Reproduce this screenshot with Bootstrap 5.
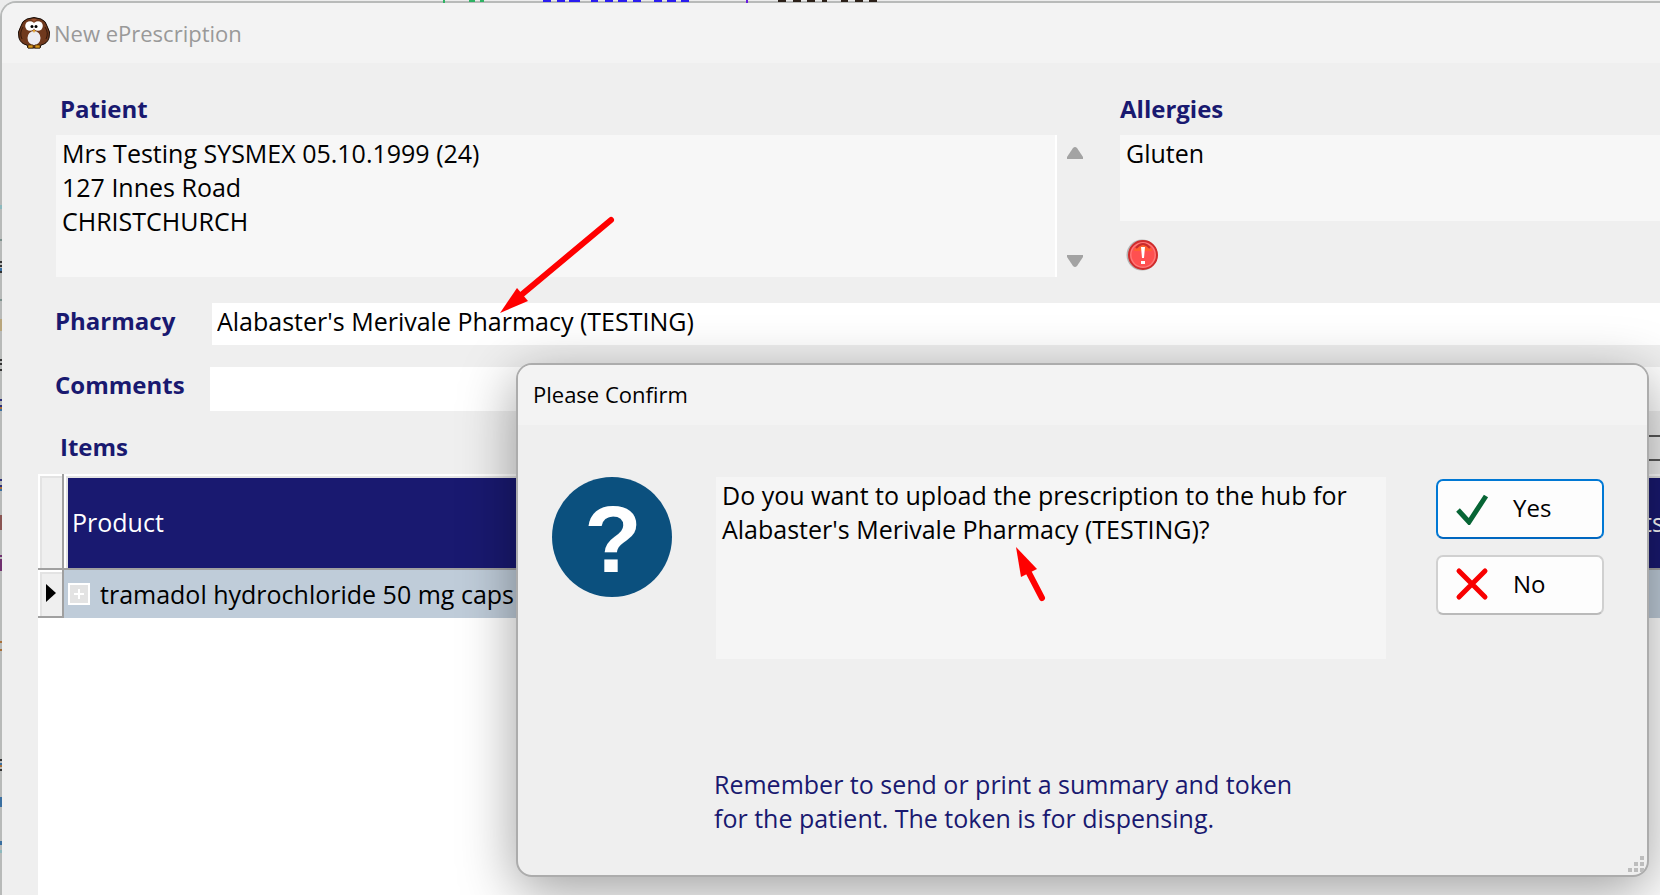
<!DOCTYPE html>
<html lang="en">
<head>
<meta charset="utf-8">
<meta name="viewport" content="width=device-width, initial-scale=1">
<title>New ePrescription</title>
<link href="https://cdn.jsdelivr.net/npm/bootstrap@5.3.0/dist/css/bootstrap.min.css" rel="stylesheet">
<style>
  body { font-family: "Open Sans", "Noto Sans", sans-serif; font-size: 25px; line-height: 34px; color: #000; background: #ececec; overflow: hidden; }
  .app-window { height: 100vh; border: 2px solid #b8bab9; border-width: 2px 0 0 2px; border-top-left-radius: 16px; background: #efefef; margin-top: 1px; overflow: hidden; }
  .title-strip { height: 60px; background: #f3f3f3; font-size: 22px; line-height: 30px; }
  .app-title { color: #999; gap: 4px; padding: 0 0 0 16px; }
  .form-body { padding-top: 30px; }
  .field-label { font-size: 24px; line-height: 32px; font-weight: 700; color: #191970; }
  .top-grid { display: grid; grid-template-columns: minmax(0, 1001fr) 35px minmax(0, 568fr); padding-left: 54px; }
  .allergy-col { margin-left: 28px; }
  .plain-field { border: 0; border-radius: 0; outline: 0; resize: none; color: #000; overflow: hidden; display: block; width: 100%; }
  .info-area { background: #f7f7f7; padding: 1px 6px; margin-top: 10px; }
  .patient-area { height: 142px; border-right: 2px solid #fff; }
  .allergy-area { height: 86px; }
  .scroll-col { margin-top: 42px; height: 142px; padding: 12px 0 10px; }
  .scroll-btn { border: 0; background: none; padding: 0; line-height: 0; }
  .entry-row { padding-left: 53px; }
  .entry-row .field-label { flex: 0 0 155px; }
  .pharmacy-row { margin-top: 26px; }
  .pharmacy-row .field-label { line-height: 36px; }
  .pharmacy-row input { height: 42px; padding: 0 5px 6px; margin-left: 2px; line-height: 34px; }
  .comments-row { margin-top: 22px; }
  .comments-row .field-label { line-height: 36px; }
  .comments-row input { height: 44px; padding: 0 5px; }
  .items-head { margin-top: 20px; padding-left: 58px; height: 43px; }
  .option-box { width: 60px; height: 26px; margin-top: 4px; border: 2px solid #5a5a5a; border-right: 0; }
  .items-panel { margin-left: 36px; background: #fff; }
  .items-grid { width: 100%; border-collapse: separate; border-spacing: 0; table-layout: fixed; }
  .items-grid .marker { width: 26px; padding: 0; background: #efefef; border-right: 2px solid #a0a0a0; border-bottom: 2px solid #a0a0a0; box-shadow: inset 2px 2px #fff, inset 4px 4px #e3e3e3; }
  .items-grid th { height: 96px; font-weight: 400; color: #fff; border-bottom: 2px solid #a0a0a0; }
  .items-grid th.head-cell { background: #191970; padding: 2px 8px 0; box-shadow: inset 2px 2px #fff, inset 4px 4px #e3e3e3; }
  .items-grid th.tail-cell { width: 17px; padding: 2px 0 0; background: #191970; box-shadow: inset 0 2px #fff, inset 0 4px #e3e3e3; }
  .items-grid tbody .marker { height: 48px; }
  .items-grid td.item-cell { background: #bfccd9; padding: 0 4px; white-space: nowrap; }
  .expander { width: 22px; height: 22px; border: 2px solid #fff; background: #e3e3e3; padding: 0; line-height: 0; margin-right: 10px; }
  .confirm-window { position: absolute; top: 363px; left: 516px; right: 11px; border: 2px solid #acacac; border-radius: 16px; background: #efefef; overflow: hidden; box-shadow: 0 14px 56px rgba(0,0,0,.38); }
  .confirm-title { padding: 0 15px; line-height: 28px; }
  .confirm-title span { padding-bottom: 2px; }
  .confirm-body { padding: 52px 43px 40px 34px; }
  .message-col { margin: 0 50px 0 42px; min-width: 0; }
  .message-box { margin: 0 0 108px 2px; height: 182px; padding: 1px 6px; background: #f5f5f5; }
  .reminder { color: #191970; max-width: 620px; }
  .choice { width: 168px; height: 60px; padding: 0 0 2px 17px; gap: 24px; border: 2px solid #d0d0d0; border-bottom-color: #bababa; border-radius: 7px; background: #fdfdfd; font-size: 24px; line-height: 32px; color: #000; }
  .choice.is-default { border-color: #0078d4; border-bottom-color: #0067c0; margin: 2px 0 16px; }
  .size-grip { position: absolute; right: 3px; bottom: 3px; }
  .overlay-art { position: absolute; pointer-events: none; }
</style>
</head>
<body>
<div class="app-window">
  <header class="title-strip app-title d-flex align-items-center">
    <svg width="32" height="32" viewBox="0 0 32 32" aria-hidden="true">
      <path d="M9 2Q16-1 23 2Q28 4 29 9Q33 15 31 21Q29 27 23 28L22 31H10L9 28Q3 27 1 21Q-1 15 3 9Q4 4 9 2Z" fill="#70391d" stroke="#160b05"/>
      <path d="M5 10Q1 16 4 22M27 10Q31 16 28 22" stroke="#35180b" fill="none"/>
      <circle cx="12" cy="9" r="4.800" fill="#fff"/><circle cx="20" cy="9" r="4.800" fill="#fff"/>
      <circle cx="14" cy="9.500" r="1.500"/><circle cx="18" cy="9.500" r="1.500"/>
      <path d="M13 2L16 5L19 2Z" fill="#9b5330"/>
      <ellipse cx="16" cy="21" rx="6.500" ry="7" fill="#ededf2"/>
      <path d="M14.500 13H17.500L16 16Z" fill="#e5a021"/>
      <path d="M10 28H15V31H10ZM17 28H22V31H17Z" fill="#d99519" stroke="#342000" stroke-width=".6"/>
    </svg>
    <span>New ePrescription</span>
  </header>

  <main class="form-body d-flex flex-column">
    <div class="top-grid">
      <div>
        <label class="field-label d-block ps-1" for="patient">Patient</label>
        <textarea id="patient" class="plain-field info-area patient-area" readonly>Mrs Testing SYSMEX 05.10.1999 (24)
127 Innes Road
CHRISTCHURCH</textarea>
      </div>
      <div class="scroll-col d-flex flex-column justify-content-between align-items-center">
        <button class="scroll-btn" type="button" aria-label="Scroll up"><svg width="16" height="12"><path d="M6 1Q8-1 10 1L16 10V12H0V10Z" fill="#a3a3a3"/></svg></button>
        <button class="scroll-btn" type="button" aria-label="Scroll down"><svg width="16" height="12"><path d="M6 11Q8 13 10 11L16 2V0H0V2Z" fill="#a3a3a3"/></svg></button>
      </div>
      <div class="allergy-col">
        <label class="field-label d-block" for="allergies">Allergies</label>
        <textarea id="allergies" class="plain-field info-area allergy-area" readonly>Gluten</textarea>
        <svg class="d-block mt-3 ms-1" width="36" height="36" viewBox="0 0 36 36" role="img" aria-label="Alert">
          <circle cx="18" cy="18" r="15.500" fill="#b5b5b5"/>
          <circle cx="19" cy="18" r="14" fill="#f77" stroke="#d02c2c" stroke-width="2"/>
          <circle cx="19" cy="18" r="11.500" fill="#ff5050"/>
          <path d="M10 14Q12 7 19 7Q26 7 28 14Z" fill="#ff6230"/>
          <path d="M12 11Q19 3 26 11" fill="none" stroke="#c92b2b" stroke-width="2"/>
          <path d="M17 10H21L20 21H18Z M17 24H21V27H17Z" fill="#fff"/>
        </svg>
      </div>
    </div>

    <div class="entry-row pharmacy-row d-flex">
      <label class="field-label" for="pharmacy">Pharmacy</label>
      <input id="pharmacy" class="plain-field bg-white" type="text" value="Alabaster's Merivale Pharmacy (TESTING)">
    </div>
    <div class="entry-row comments-row d-flex">
      <label class="field-label" for="comments">Comments</label>
      <input id="comments" class="plain-field bg-white" type="text">
    </div>

    <div class="items-head d-flex justify-content-between">
      <h2 class="field-label m-0">Items</h2>
      <div class="option-box"></div>
    </div>
    <div class="items-panel vh-100">
      <table class="items-grid">
        <thead>
          <tr><th class="marker"></th><th class="head-cell" scope="col">Product</th><th class="tail-cell" scope="col">ts</th></tr>
        </thead>
        <tbody>
          <tr>
            <td class="marker"><svg class="d-block ms-2" width="10" height="18"><path d="M0 0L10 9L0 18Z"/></svg></td>
            <td class="item-cell" colspan="2"><div class="d-flex align-items-center"><button class="expander" type="button" aria-label="Expand item"><svg width="10" height="10"><path d="M5 0V10M0 5H10" stroke="#fff" stroke-width="2"/></svg></button><span>tramadol hydrochloride 50 mg caps</span></div></td>
          </tr>
        </tbody>
      </table>
    </div>
  </main>
</div>

<!-- Slivers of the window behind, along the top and left edges -->
<svg class="overlay-art top-0 start-0" width="900" height="3" aria-hidden="true">
  <path d="M444 0V3M469 1H475M480 1H484" stroke="#2fb364" stroke-width="2"/>
  <path d="M543 1H551M557 1H565M569 1H580M591 1H598M605 1H613M618 1H627M633 1H641M654 1H662M667 1H676M681 1H689" stroke="#2a1cf0" stroke-width="2"/>
  <path d="M747 0V3" stroke="#6a1be0" stroke-width="2"/>
  <path d="M778 1H786M793 1H801M807 1H815M822 1H827M841 1H848M855 1H863M869 1H877" stroke="#2b2018" stroke-width="2"/>
</svg>
<svg class="overlay-art top-0 start-0" width="2" height="895" aria-hidden="true">
  <g stroke-width="2" fill="none">
    <path d="M1 205V209M1 850V853" stroke="#8db9bd"/>
    <path d="M1 239V241M1 299V301" stroke="#7a8f8b"/>
    <path d="M1 261V263M1 265V267M1 271V273M1 359V361M1 363V365M1 369V371M1 759V761M1 769V771" stroke="#333"/>
    <path d="M1 268V271M1 409V411M1 489V491M1 763V765M1 797V807M1 841V845" stroke="#3a6fa0"/>
    <path d="M1 319V331" stroke="#b9a67c"/>
    <path d="M1 399V401M1 405V407M1 479V481M1 485V487" stroke="#2c2f7c"/>
    <path d="M1 407V409M1 487V489M1 641V643M1 649V651M1 765V767" stroke="#a9713a"/>
    <path d="M1 515V530" stroke="#8a5552"/>
    <path d="M1 555V557M1 559V571" stroke="#70306f"/>
  </g>
</svg>

<section class="confirm-window" role="dialog" aria-labelledby="confirm-title">
  <header class="title-strip confirm-title d-flex align-items-center"><span id="confirm-title">Please Confirm</span></header>
  <div class="confirm-body d-flex align-items-start">
    <svg class="flex-shrink-0" width="120" height="120" viewBox="0 0 120 120" role="img" aria-label="Question">
      <circle cx="60" cy="60" r="60" fill="#0b507e"/>
      <text x="61" y="95" text-anchor="middle" font-family="Liberation Sans, sans-serif" font-size="94" font-weight="700" fill="#fff">?</text>
    </svg>
    <div class="message-col flex-grow-1">
      <div class="message-box">Do you want to upload the prescription to the hub for<br>Alabaster's Merivale Pharmacy (TESTING)?</div>
      <p class="reminder m-0">Remember to send or print a summary and token<br>for the patient. The token is for dispensing.</p>
    </div>
    <div class="flex-shrink-0">
      <button class="choice is-default d-flex align-items-center" type="button">
        <svg width="34" height="34" viewBox="0 0 34 34" aria-hidden="true"><path d="M3 19L14 31L31 5" fill="none" stroke="#076535" stroke-width="5"/></svg>Yes
      </button>
      <button class="choice d-flex align-items-center" type="button">
        <svg width="34" height="34" viewBox="0 0 34 34" aria-hidden="true"><path d="M4 4L30 30M30 4L4 30" stroke="#f80000" stroke-width="5" stroke-linecap="round"/></svg>No
      </button>
    </div>
  </div>
  <svg class="size-grip" width="16" height="16" aria-hidden="true"><path d="M12 0h4v4h-4zM6 6h4v4H6zM12 6h4v4h-4zM0 12h4v4H0zM6 12h4v4H6zM12 12h4v4h-4z" fill="#bdbdbd"/></svg>
</section>

<!-- Annotation arrows -->
<svg class="overlay-art top-0 start-0" width="1100" height="640" aria-hidden="true">
  <g fill="#f00" stroke="#f00" stroke-linecap="round">
    <path d="M611 220L520 296" stroke-width="6"/>
    <path d="M500 313L517 288L528 301Z" stroke="none"/>
    <path d="M1042 598L1029 573" stroke-width="6"/>
    <path d="M1016 547L1037 569L1021 577Z" stroke="none"/>
  </g>
</svg>
<script src="https://cdn.jsdelivr.net/npm/bootstrap@5.3.0/dist/js/bootstrap.bundle.min.js"></script>
</body>
</html>
